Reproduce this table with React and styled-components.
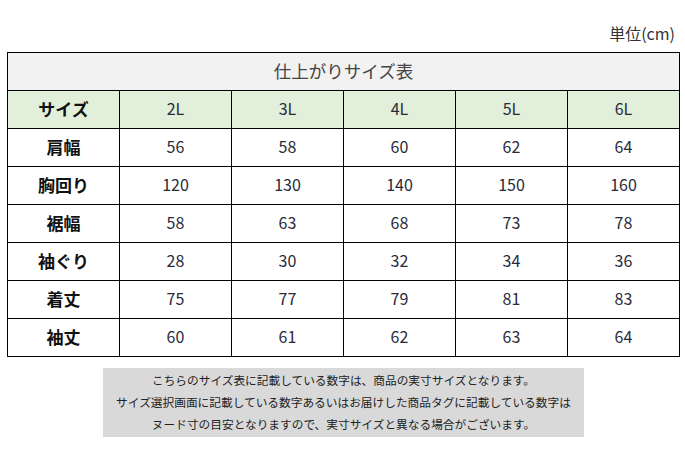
import React from "react";
import styled, { createGlobalStyle } from "styled-components";

const GlobalStyle = createGlobalStyle`
  html, body {
    margin: 0;
    padding: 0;
    background: #ffffff;
  }
  body {
    font-family: "Noto Sans CJK JP", "Noto Sans", sans-serif;
    color: #222;
  }
`;

const Page = styled.main`
  width: 673px;
  margin-left: 7px;
  padding-top: 23px;
`;

const Unit = styled.div`
  text-align: right;
  font-size: 16px;
  line-height: 20px;
  color: #333;
  padding-right: 5px;
  margin-bottom: 9px;
`;

const Grid = styled.div`
  display: grid;
  grid-template-columns: repeat(6, 112px);
  grid-auto-rows: 38px;
  border-top: 1px solid #000;
  border-left: 1px solid #000;
`;

const Cell = styled.div`
  display: flex;
  align-items: center;
  justify-content: center;
  padding-bottom: 3px;
  border-right: 1px solid #000;
  border-bottom: 1px solid #000;
  font-size: ${(p) => (p.$label ? "17px" : "16px")};
  font-weight: ${(p) => (p.$label ? 700 : 400)};
  color: ${(p) => (p.$label ? "#111" : "#2a2a3a")};
  background: ${(p) => (p.$head ? "#e2efda" : "#ffffff")};
`;

const TitleCell = styled(Cell)`
  grid-column: 1 / -1;
  background: #f2f2f2;
  font-size: 17.5px;
  color: #444;
`;

const Note = styled.div`
  width: 481px;
  margin: 11px auto 0;
  padding: 1px 0 2px;
  background: #d9d9d9;
  text-align: center;
  font-size: 11.7px;
  line-height: 22px;
  color: #222;
`;

const sizes = ["2L", "3L", "4L", "5L", "6L"];

const rows = [
  ["肩幅", [56, 58, 60, 62, 64]],
  ["胸回り", [120, 130, 140, 150, 160]],
  ["裾幅", [58, 63, 68, 73, 78]],
  ["袖ぐり", [28, 30, 32, 34, 36]],
  ["着丈", [75, 77, 79, 81, 83]],
  ["袖丈", [60, 61, 62, 63, 64]],
];

export default function App() {
  return (
    <>
      <GlobalStyle />
      <Page>
        <Unit>単位(cm)</Unit>
        <Grid>
          <TitleCell>仕上がりサイズ表</TitleCell>
          <Cell $head $label>
            サイズ
          </Cell>
          {sizes.map((s) => (
            <Cell $head key={s}>
              {s}
            </Cell>
          ))}
          {rows.map(([label, values]) => (
            <React.Fragment key={label}>
              <Cell $label>{label}</Cell>
              {values.map((v, i) => (
                <Cell key={i}>{v}</Cell>
              ))}
            </React.Fragment>
          ))}
        </Grid>
        <Note>
          こちらのサイズ表に記載している数字は、商品の実寸サイズとなります。
          <br />
          サイズ選択画面に記載している数字あるいはお届けした商品タグに記載している数字は
          <br />
          ヌード寸の目安となりますので、実寸サイズと異なる場合がございます。
        </Note>
      </Page>
    </>
  );
}
